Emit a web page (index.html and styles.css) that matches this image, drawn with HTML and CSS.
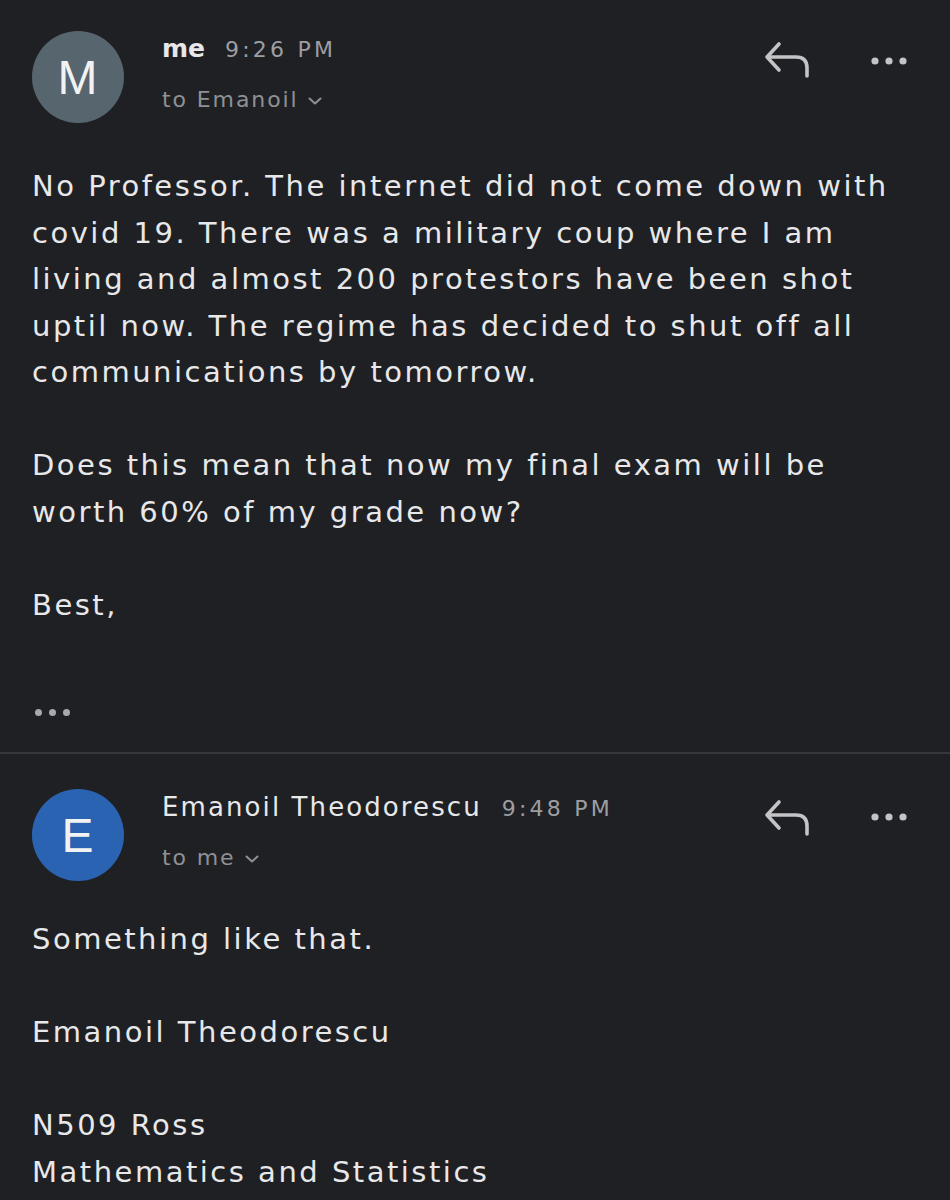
FILE: index.html
```html
<!DOCTYPE html>
<html lang="en">
<head>
<meta charset="utf-8">
<title>Email thread</title>
<link rel="stylesheet" href="styles.css">
</head>
<body>
<main class="thread">
  <article class="message message--first">
    <header class="msg-head">
      <div class="avatar avatar--gray">M</div>
      <div class="meta">
        <div class="meta-top"><span class="sender">me</span><span class="time">9:26 PM</span></div>
        <div class="meta-to">to Emanoil<svg class="chev" viewBox="0 0 14 8" width="14" height="8"><polyline points="1.5,1.5 7,6.5 12.5,1.5"/></svg></div>
      </div>
      <div class="actions">
        <svg class="icon-reply" viewBox="0 0 46 38" width="46" height="38"><path d="M15 3 L3 16 L15 29 M3 16 H32 Q43 16 43 27 V35"/></svg>
        <svg class="icon-more" viewBox="0 0 38 38" width="38" height="38"><circle cx="5" cy="20" r="3.6"/><circle cx="19" cy="20" r="3.6"/><circle cx="33" cy="20" r="3.6"/></svg>
      </div>
    </header>
    <div class="msg-body">
      <p>No Professor. The internet did not come down with<br>covid 19. There was a military coup where I am<br>living and almost 200 protestors have been shot<br>uptil now. The regime has decided to shut off all<br>communications by tomorrow.</p>
      <p>Does this mean that now my final exam will be<br>worth 60% of my grade now?</p>
      <p>Best,</p>
    </div>
    <div class="trimmed"><span></span><span></span><span></span></div>
  </article>
  <article class="message message--second">
    <header class="msg-head">
      <div class="avatar avatar--blue">E</div>
      <div class="meta">
        <div class="meta-top"><span class="sender sender--full">Emanoil Theodorescu</span><span class="time">9:48 PM</span></div>
        <div class="meta-to">to me<svg class="chev" viewBox="0 0 14 8" width="14" height="8"><polyline points="1.5,1.5 7,6.5 12.5,1.5"/></svg></div>
      </div>
      <div class="actions">
        <svg class="icon-reply" viewBox="0 0 46 38" width="46" height="38"><path d="M15 3 L3 16 L15 29 M3 16 H32 Q43 16 43 27 V35"/></svg>
        <svg class="icon-more" viewBox="0 0 38 38" width="38" height="38"><circle cx="5" cy="18" r="3.6"/><circle cx="19" cy="18" r="3.6"/><circle cx="33" cy="18" r="3.6"/></svg>
      </div>
    </header>
    <div class="msg-body">
      <p>Something like that.</p>
      <p>Emanoil Theodorescu</p>
      <p>N509 Ross<br>Mathematics and Statistics</p>
    </div>
  </article>
</main>
</body>
</html>
```
FILE: styles.css
```css
html, body {
  margin: 0;
  padding: 0;
  background: #1f2024;
}
body {
  font-family: "DejaVu Sans", "Liberation Sans", Arial, sans-serif;
  color: #e6e6e8;
  width: 950px;
  height: 1200px;
  overflow: hidden;
}
.thread {
  display: flex;
  flex-direction: column;
}
.message {
  padding: 0 0 0 32px;
}
.message--first {
  padding-top: 31px;
  border-bottom: 2px solid #37383c;
}
.message--second {
  padding-top: 35px;
}
.msg-head {
  display: flex;
  align-items: flex-start;
}
.avatar {
  width: 92px;
  height: 92px;
  border-radius: 50%;
  flex: 0 0 92px;
  display: flex;
  align-items: center;
  justify-content: center;
  font-family: "Liberation Sans", Arial, sans-serif;
  font-size: 48px;
  color: #f2f2f2;
  letter-spacing: 1px;
}
.avatar--gray {
  background: #56656e;
}
.avatar--blue {
  background: #2b63b3;
}
.meta {
  margin-left: 38px;
  display: flex;
  flex-direction: column;
}
.meta-top {
  height: 36px;
  line-height: 36px;
  white-space: nowrap;
}
.sender {
  font-size: 25px;
  font-weight: 700;
  letter-spacing: 0;
  color: #e8e8ea;
}
.sender--full {
  font-size: 26px;
  font-weight: 400;
  letter-spacing: 2.1px;
}
.time {
  margin-left: 20px;
  font-size: 22px;
  letter-spacing: 3.2px;
  color: #9d9ea2;
}
.meta-to {
  margin-top: 18px;
  height: 30px;
  line-height: 30px;
  font-size: 22px;
  letter-spacing: 1.9px;
  color: #8f9094;
  display: flex;
  align-items: center;
  white-space: nowrap;
}
.chev {
  margin-left: 9px;
  margin-top: 2px;
  fill: none;
  stroke: #8f9094;
  stroke-width: 2;
  stroke-linecap: round;
  stroke-linejoin: round;
}
.actions {
  margin-left: auto;
  margin-right: 42px;
  margin-top: 10px;
  display: flex;
  align-items: flex-start;
  gap: 60px;
}
.icon-reply {
  fill: none;
  stroke: #c4c4c7;
  stroke-width: 3.6;
  stroke-linecap: round;
  stroke-linejoin: round;
}
.icon-more {
  fill: #c4c4c7;
}
.msg-body {
  font-size: 29px;
  line-height: 46.5px;
  letter-spacing: 2.5px;
  white-space: nowrap;
  color: #e8e8ea;
}
.message--first .msg-body {
  margin-top: 40px;
}
.message--second .msg-body {
  margin-top: 35px;
}
.msg-body p {
  margin: 0 0 46.5px 0;
}
.msg-body p:last-child {
  margin-bottom: 0;
}
.trimmed {
  display: flex;
  gap: 7px;
  margin-top: 81px;
  margin-left: 3px;
  padding-bottom: 36px;
}
.trimmed span {
  width: 7px;
  height: 7px;
  border-radius: 50%;
  background: #a9a9ad;
}
```
